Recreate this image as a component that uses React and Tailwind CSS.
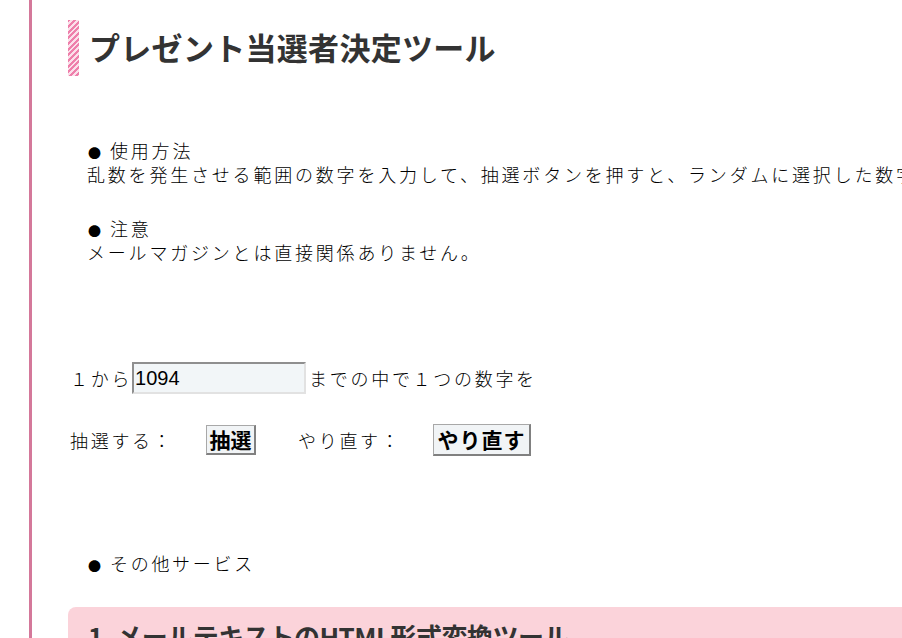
import React, { useState } from "react";

const jp = "font-['Noto_Sans_CJK_JP','Noto_Sans',sans-serif]";

const Bullet = () => (
    <span className="inline-block w-[23px] pl-[1px] align-middle text-[13px] leading-none tracking-normal relative -top-[1px]">●</span>
);

const App = () => {
    const [max, setMax] = useState("1094");
    const [result, setResult] = useState(null);

    const draw = () => {
        const n = parseInt(max, 10);
        if (n > 0) setResult(Math.floor(Math.random() * n) + 1);
    };

    return (
        <div className={`bg-white min-h-screen pl-[29px] ${jp} text-black`}>
            <div className="border-l-[3px] border-[#d4789a] min-h-[638px] pl-[36px] pt-[20px] overflow-hidden">

                {/* タイトル */}
                <div className="flex items-center h-[56px]">
                    <div className="w-[11px] h-[56px] bg-[repeating-linear-gradient(135deg,#ee7fab_0px,#ee7fab_2px,#fbe0ea_2px,#fbe0ea_4px)]"></div>
                    <h1 className="ml-[10px] -mt-[4px] text-[31px] leading-none font-bold text-[#333] tracking-[0.3px] whitespace-nowrap">プレゼント当選者決定ツール</h1>
                </div>

                {/* 説明 */}
                <div className="mt-[62px] ml-[19px] text-[18px] leading-[24px] tracking-[2.8px] whitespace-nowrap font-light">
                    <p><Bullet />使用方法</p>
                    <p>乱数を発生させる範囲の数字を入力して、抽選ボタンを押すと、ランダムに選択した数字を表示します。</p>
                    <p className="mt-[30px]"><Bullet />注意</p>
                    <p>メールマガジンとは直接関係ありません。</p>
                </div>

                {/* 入力 */}
                <div className="mt-[98px] flex items-center h-[32px] text-[18px] tracking-[2.7px] whitespace-nowrap font-light">
                    <span className="pl-[2px]">１から</span>
                    <input
                        value={max}
                        onChange={(e) => setMax(e.target.value)}
                        className="w-[174px] h-[32px] bg-[#f2f6f8] border-2 border-t-[#8f8f8f] border-l-[#8f8f8f] border-b-[#e2e2e2] border-r-[#e2e2e2] px-[1px] text-[20px] tracking-normal font-['Liberation_Sans',sans-serif] outline-none"
                    />
                    <span className="ml-[3px]">までの中で１つの数字を</span>
                </div>

                <div className="mt-[30px] flex items-center h-[32px] text-[18px] tracking-[2.7px] whitespace-nowrap font-light">
                    <span className="w-[138px] pl-[2px]">抽選する：</span>
                    <button onClick={draw} className="w-[50px] h-[30px] bg-[#f1f4f6] border border-[#a8a8a8] border-b-2 border-r-2 border-b-[#808080] border-r-[#808080] text-[21px] font-bold tracking-normal leading-none">抽選</button>
                    <span className="ml-[42px] w-[135px]">やり直す：</span>
                    <button onClick={() => setResult(null)} className="w-[98px] h-[32px] bg-[#f1f4f6] border border-[#a8a8a8] border-b-2 border-r-2 border-b-[#808080] border-r-[#808080] text-[21px] font-bold tracking-[1px] leading-none">やり直す</button>
                    {result !== null && <span className="ml-6 text-[20px] font-bold text-[#d4789a]">{result}</span>}
                </div>

                {/* その他 */}
                <div className="mt-[95px] ml-[19px] text-[18px] leading-[24px] tracking-[2.7px] whitespace-nowrap font-light">
                    <p><Bullet />その他サービス</p>
                </div>

                <div className="mt-[32px] bg-[#fbd3da] rounded-tl-[8px] pl-[20px] pt-[16px] pb-6">
                    <h2 className="text-[26px] font-bold text-[#333] leading-none whitespace-nowrap tracking-[-0.5px]">1. メールテキストのHTML形式変換ツール</h2>
                </div>
            </div>
        </div>
    );
};

export default App;
